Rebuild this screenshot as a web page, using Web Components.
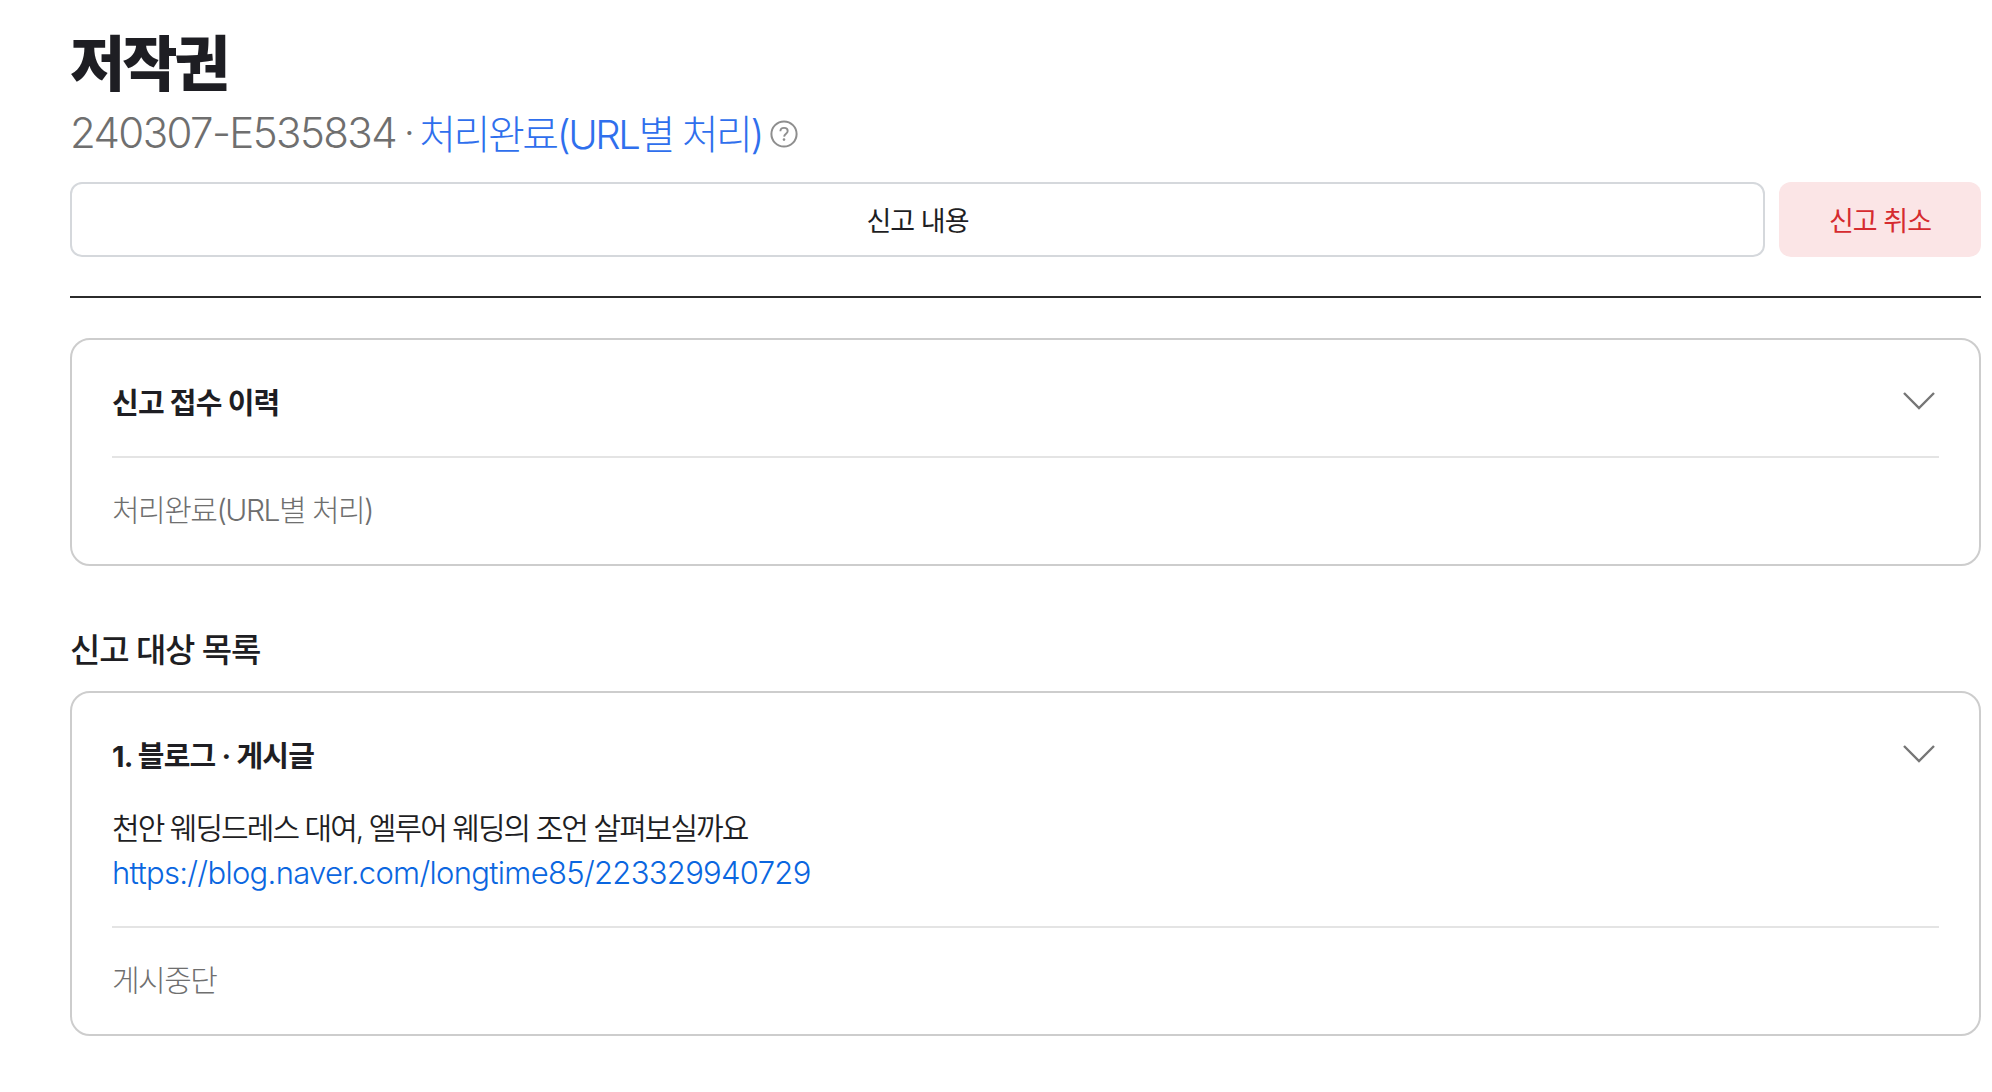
<!DOCTYPE html>
<html lang="ko"><head><meta charset="utf-8">
<style>
html,body{margin:0;background:#fff}
body{font-family:"Inter","Noto Sans CJK KR","Noto Sans",sans-serif;color:#1e1e23}
</style></head><body>
<template id="t-page"><style>
:host{display:block;padding:27px 11px 0 70px;height:1065px;overflow:hidden}
</style><slot></slot></template>

<template id="t-head"><style>
:host{display:block}
h1{margin:0;font-size:60px;line-height:74px;font-weight:900;letter-spacing:-3px;color:#1e1e23}
.sub{display:flex;align-items:center;height:60px;margin-top:1px;font-size:42px;font-weight:300;letter-spacing:-1.6px;color:#6f6f6f;white-space:nowrap}
.st{color:#2f6fed;font-weight:300;font-size:40px;letter-spacing:-2.4px}
.dot{margin:0 6px 0 8px;font-size:38px}
svg{margin-left:7px;display:block;margin-top:3px}
</style><h1><slot name="title"></slot></h1>
<div class="sub"><span><slot name="id"></slot></span><span class="dot">·</span><span class="st"><slot name="status"></slot></span>
<svg width="30" height="30" viewBox="0 0 30 30" aria-hidden="true"><circle cx="15" cy="15" r="12.6" fill="none" stroke="#8e8e8e" stroke-width="2"/><path d="M11.4 12.2c0-2 1.6-3.3 3.7-3.3s3.6 1.3 3.6 3.1c0 2.6-3.4 2.7-3.6 5.6" fill="none" stroke="#8e8e8e" stroke-width="1.9"/><circle cx="15" cy="20.6" r="1.3" fill="#8e8e8e"/></svg></div></template>

<template id="t-actions"><style>
:host{display:flex;gap:14px;margin-top:20px;padding-bottom:39px;border-bottom:2px solid #2b2b2b}
</style><slot></slot></template>

<template id="t-btn"><style>
:host{display:flex;align-items:center;justify-content:center;height:75px;box-sizing:border-box;border-radius:12px;font-size:27px;letter-spacing:-1px;white-space:nowrap}
:host([kind=outline]){flex:1;border:2px solid #d5d8dc;color:#1e1e23}
:host([kind=danger]){width:202px;background:#fbe5e6;color:#d62b2f}
</style><slot></slot></template>

<template id="t-card"><style>
:host{display:block;border:2px solid #cdcdcd;border-radius:20px;padding:0 40px;background:#fff}
.top{position:relative;padding-top:42px}
.title{font-size:29px;line-height:44px;font-weight:700;letter-spacing:-.8px;color:#1e1e23}
svg{position:absolute;right:3px;top:51px}
.body{display:block}
.foot{border-top:2px solid #e4e4e4;margin-top:30px;padding-top:29px;padding-bottom:31px;font-size:30px;line-height:46px;font-weight:300;letter-spacing:-1.5px;color:#6f6f6f}
</style><div class="top"><div class="title"><slot name="title"></slot></div>
<svg width="34" height="22" viewBox="0 0 34 22" aria-hidden="true"><path d="M2 2l15 15L32 2" fill="none" stroke="#767676" stroke-width="2.4"/></svg></div>
<div class="body"><slot name="body"></slot></div>
<div class="foot"><slot name="foot"></slot></div></template>

<template id="t-section"><style>
:host{display:block;margin:60px 0 0;font-size:33px;line-height:48px;font-weight:500;letter-spacing:-1.2px;color:#1e1e23;padding-bottom:17px}
</style><slot></slot></template>

<template id="t-post"><style>
:host{display:block;margin-top:27px;padding-bottom:2px;font-size:30px;line-height:44px;letter-spacing:-1.95px;color:#1e1e23;font-weight:350}
a{display:block;color:#0a66e0;text-decoration:none;font-weight:300;font-size:31px;letter-spacing:-.7px;line-height:45px;margin-bottom:-1px}
</style><div><slot name="name"></slot></div><a><slot name="url"></slot></a></template>

<script>
for (const [name,id] of [['rp-page','t-page'],['rp-head','t-head'],['rp-actions','t-actions'],['rp-btn','t-btn'],['rp-card','t-card'],['rp-section','t-section'],['rp-post','t-post']]) {
  customElements.define(name, class extends HTMLElement {
    constructor(){super();this.attachShadow({mode:'open'}).appendChild(document.getElementById(id).content.cloneNode(true));}
  });
}
</script>

<rp-page>
  <rp-head><span slot="title">저작권</span><span slot="id">240307-E535834</span><span slot="status">처리완료(URL별 처리)</span></rp-head>
  <rp-actions><rp-btn kind="outline">신고 내용</rp-btn><rp-btn kind="danger">신고 취소</rp-btn></rp-actions>
  <rp-card style="margin-top:40px"><span slot="title">신고 접수 이력</span><span slot="foot">처리완료(URL별 처리)</span></rp-card>
  <rp-section>신고 대상 목록</rp-section>
  <rp-card><span slot="title">1. 블로그 · 게시글</span>
    <rp-post slot="body"><span slot="name">천안 웨딩드레스 대여, 엘루어 웨딩의 조언 살펴보실까요</span><span slot="url">https://blog.naver.com/longtime85/223329940729</span></rp-post>
    <span slot="foot">게시중단</span></rp-card>
</rp-page>
</body></html>
